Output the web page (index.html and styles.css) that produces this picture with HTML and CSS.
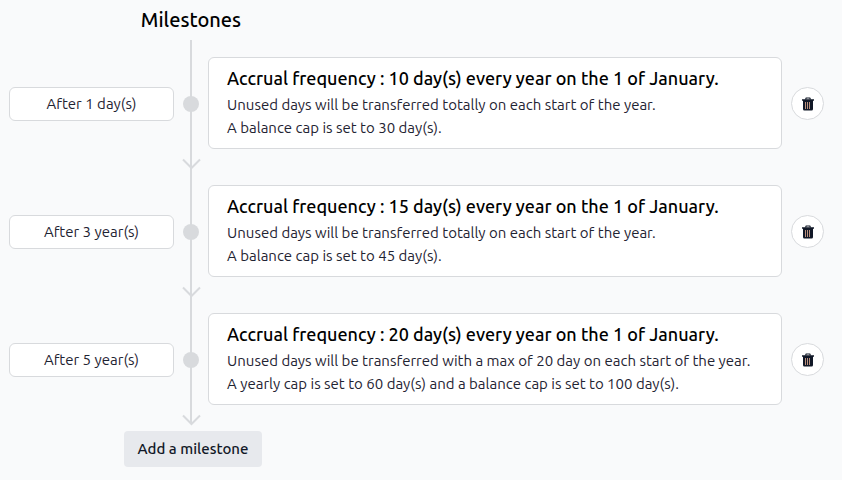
FILE: index.html
```html
<!DOCTYPE html>
<html lang="en">
<head>
<meta charset="utf-8">
<meta name="viewport" content="width=device-width, initial-scale=1">
<title>Milestones</title>
<link rel="stylesheet" href="styles.css">
</head>
<body>
<svg class="sprite" aria-hidden="true">
  <symbol id="trash" viewBox="0 0 14 14">
    <path fill="none" stroke="currentColor" stroke-width="1.2" d="M4.500 2.500 5.200 1h3.600l.7 1.500"/>
    <path fill="currentColor" d="M1 2.300h12v1.500h-1V12q0 1.500-1.400 1.500H3.400Q2 13.500 2 12V3.800H1z"/>
    <path fill="none" stroke="#b98f7c" d="M4.500 5v7M6.500 5v7M8.500 5v7"/>
  </symbol>
  <symbol id="chevron" viewBox="0 0 20 12">
    <path fill="none" stroke="currentColor" stroke-width="2" d="M2 1.500 10.500 10 19 1.500"/>
  </symbol>
</svg>
<main class="plan">
  <h1 class="plan-title">Milestones</h1>
  <ol class="milestones">
    <li class="milestone">
      <div class="delay">After 1 day(s)</div>
      <div class="rail"><span class="dot"></span><svg class="arrow" aria-hidden="true"><use href="#chevron"/></svg></div>
      <article class="card">
        <h2 class="card-title">Accrual frequency : 10 day(s) every year on the 1 of January.</h2>
        <p class="card-text">Unused days will be transferred totally on each start of the year.</p>
        <p class="card-text">A balance cap is set to 30 day(s).</p>
      </article>
      <button class="remove" type="button" aria-label="Delete"><svg class="icon" aria-hidden="true"><use href="#trash"/></svg></button>
    </li>
    <li class="milestone">
      <div class="delay">After 3 year(s)</div>
      <div class="rail"><span class="dot"></span><svg class="arrow" aria-hidden="true"><use href="#chevron"/></svg></div>
      <article class="card">
        <h2 class="card-title">Accrual frequency : 15 day(s) every year on the 1 of January.</h2>
        <p class="card-text">Unused days will be transferred totally on each start of the year.</p>
        <p class="card-text">A balance cap is set to 45 day(s).</p>
      </article>
      <button class="remove" type="button" aria-label="Delete"><svg class="icon" aria-hidden="true"><use href="#trash"/></svg></button>
    </li>
    <li class="milestone">
      <div class="delay">After 5 year(s)</div>
      <div class="rail"><span class="dot"></span><svg class="arrow" aria-hidden="true"><use href="#chevron"/></svg></div>
      <article class="card">
        <h2 class="card-title">Accrual frequency : 20 day(s) every year on the 1 of January.</h2>
        <p class="card-text">Unused days will be transferred with a max of 20 day on each start of the year.</p>
        <p class="card-text">A yearly cap is set to 60 day(s) and a balance cap is set to 100 day(s).</p>
      </article>
      <button class="remove" type="button" aria-label="Delete"><svg class="icon" aria-hidden="true"><use href="#trash"/></svg></button>
    </li>
  </ol>
  <div class="plan-footer"><button class="add" type="button">Add a milestone</button></div>
</main>
</body>
</html>
```
FILE: styles.css
```css
* {
  box-sizing: border-box;
}

body {
  margin: 0;
  background: #f9fafb;
  color: #1f2433;
  font: 15px/23px Ubuntu, "Noto Sans", "Open Sans", sans-serif;
}

h1,
h2,
p,
ol {
  margin: 0;
  padding: 0;
}

.sprite {
  position: absolute;
  width: 0;
  height: 0;
}

.plan {
  padding: 0 18px 12px 9px;
}

.plan-title,
.plan-footer {
  width: 364px;
  text-align: center;
}

.plan-title {
  padding: 5px 0;
  color: #000;
  font-size: 20px;
  font-weight: 500;
  line-height: 30px;
}

.milestones {
  list-style: none;
}

.milestone {
  display: grid;
  grid-template-columns: 165px 16px 1fr 33px;
  column-gap: 9px;
  align-items: center;
}

.delay,
.card,
.remove {
  border: 1px solid #d8dadd;
  background: #fff;
}

.delay {
  padding: 5px 12px;
  border-radius: 6px;
  line-height: 22px;
  text-align: center;
}

.rail {
  position: relative;
  display: flex;
  align-self: stretch;
  align-items: center;
  justify-content: center;
  background: linear-gradient(#d8dadd, #d8dadd) center / 2px 100% no-repeat;
}

.dot {
  width: 16px;
  height: 16px;
  border-radius: 50%;
  background: #d8dadd;
}

.arrow {
  position: absolute;
  bottom: -2px;
  left: -2px;
  width: 20px;
  height: 12px;
  color: #d8dadd;
}

.card {
  margin: 17px 0 19px;
  padding: 7px 18px 9px;
  border-radius: 6px;
}

.card-title {
  margin-bottom: 1px;
  color: #000;
  font-size: 18px;
  font-weight: 500;
  line-height: 27px;
}

.delay,
.rail .dot,
.remove {
  margin-bottom: 1px;
}

.remove {
  display: grid;
  place-items: center;
  width: 33px;
  height: 33px;
  padding: 0;
  border-radius: 50%;
  color: #111827;
}

.icon {
  width: 14px;
  height: 14px;
}

.plan-footer {
  padding: 7px 0 0 4px;
}

.add {
  padding: 6px 14px;
  border: 0;
  border-radius: 4px;
  background: #e7e9ed;
  color: #111827;
  font: inherit;
  font-weight: 500;
  line-height: 24px;
}
```
